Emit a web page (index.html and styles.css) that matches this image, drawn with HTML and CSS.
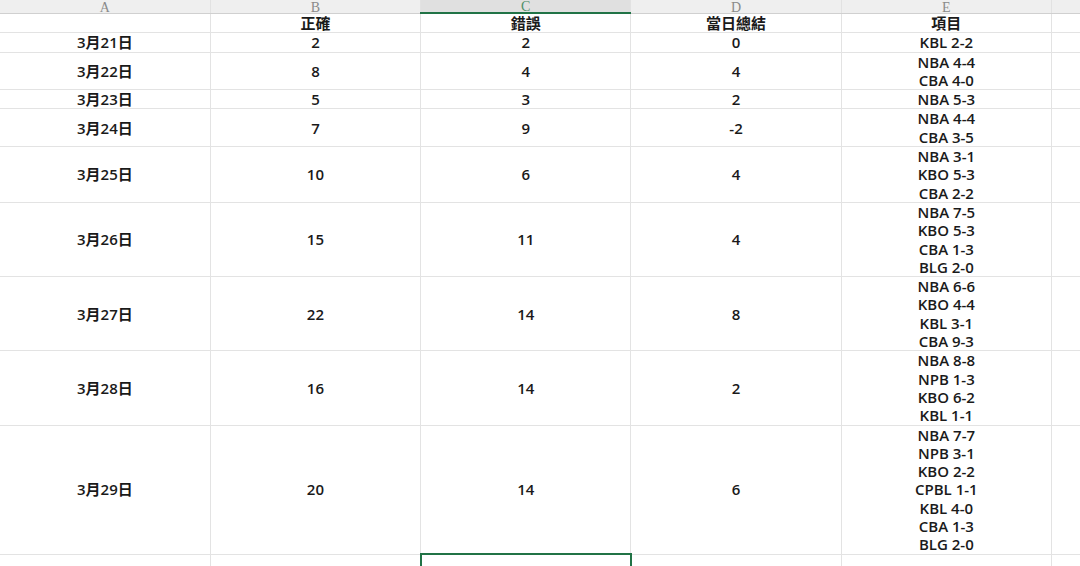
FILE: index.html
```
<!DOCTYPE html>
<html>
<head>
    <title>Daily Results</title>
    <link rel="stylesheet" href="styles.css">
</head>
<body>
    <div class="viewport">
    <table class="sheet">
        <colgroup>
            <col class="col"><col class="col"><col class="col"><col class="col"><col class="col"><col class="col">
        </colgroup>
        <thead>
            <tr class="letters">
                <th>A</th><th>B</th><th class="active">C</th><th>D</th><th>E</th><th></th>
            </tr>
        </thead>
        <tbody>
            <tr>
                <td></td><td>正確</td><td>錯誤</td><td>當日總結</td><td>項目</td><td></td>
            </tr>
            <tr>
                <td>3月21日</td><td>2</td><td>2</td><td>0</td><td>KBL 2-2</td><td></td>
            </tr>
            <tr>
                <td>3月22日</td><td>8</td><td>4</td><td>4</td><td>NBA 4-4<br>CBA 4-0</td><td></td>
            </tr>
            <tr>
                <td>3月23日</td><td>5</td><td>3</td><td>2</td><td>NBA 5-3</td><td></td>
            </tr>
            <tr>
                <td>3月24日</td><td>7</td><td>9</td><td>-2</td><td>NBA 4-4<br>CBA 3-5</td><td></td>
            </tr>
            <tr>
                <td>3月25日</td><td>10</td><td>6</td><td>4</td><td>NBA 3-1<br>KBO 5-3<br>CBA 2-2</td><td></td>
            </tr>
            <tr>
                <td>3月26日</td><td>15</td><td>11</td><td>4</td><td>NBA 7-5<br>KBO 5-3<br>CBA 1-3<br>BLG 2-0</td><td></td>
            </tr>
            <tr>
                <td>3月27日</td><td>22</td><td>14</td><td>8</td><td>NBA 6-6<br>KBO 4-4<br>KBL 3-1<br>CBA 9-3</td><td></td>
            </tr>
            <tr>
                <td>3月28日</td><td>16</td><td>14</td><td>2</td><td>NBA 8-8<br>NPB 1-3<br>KBO 6-2<br>KBL 1-1</td><td></td>
            </tr>
            <tr>
                <td>3月29日</td><td>20</td><td>14</td><td>6</td><td>NBA 7-7<br>NPB 3-1<br>KBO 2-2<br>CPBL 1-1<br>KBL 4-0<br>CBA 1-3<br>BLG 2-0</td><td></td>
            </tr>
            <tr>
                <td></td><td></td><td class="selected"></td><td></td><td></td><td></td>
            </tr>
        </tbody>
    </table>
    </div>
</body>
</html>
```

FILE: styles.css
```
html, body {
    margin: 0;
    padding: 0;
    background: #fff;
}
.viewport {
    width: 1080px;
    height: 566px;
    overflow: hidden;
}
.sheet {
    border-collapse: collapse;
    table-layout: fixed;
    width: 1262px;
    font-family: "Open Sans", "Noto Sans CJK TC", sans-serif;
    font-size: 15px;
    font-weight: 600;
    color: #1a1a1a;
}
.col {
    width: 210.3px;
}
.letters th {
    height: 12px;
    padding: 0;
    line-height: 10px;
    vertical-align: bottom;
    font-family: "Liberation Serif", serif;
    font-weight: normal;
    font-size: 14px;
    color: #8a8a8a;
    background: #efefef;
    border-bottom: 1px solid #d0d0d0;
    border-left: 1px solid #e2e2e2;
    overflow: hidden;
}
.letters th.active {
    background: #e0e0e0;
    color: #4f8f6a;
    border-bottom: 2px solid #217346;
}
.sheet td {
    padding: 0;
    line-height: 18.3px;
    text-align: center;
    vertical-align: middle;
    border: 1px solid #e3e3e3;
    border-top: none;
    white-space: nowrap;
}
.sheet td:first-child,
.letters th:first-child {
    border-left: none;
}
.sheet td.selected {
    height: 20px;
    outline: 2px solid #217346;
    outline-offset: -1px;
}
```
